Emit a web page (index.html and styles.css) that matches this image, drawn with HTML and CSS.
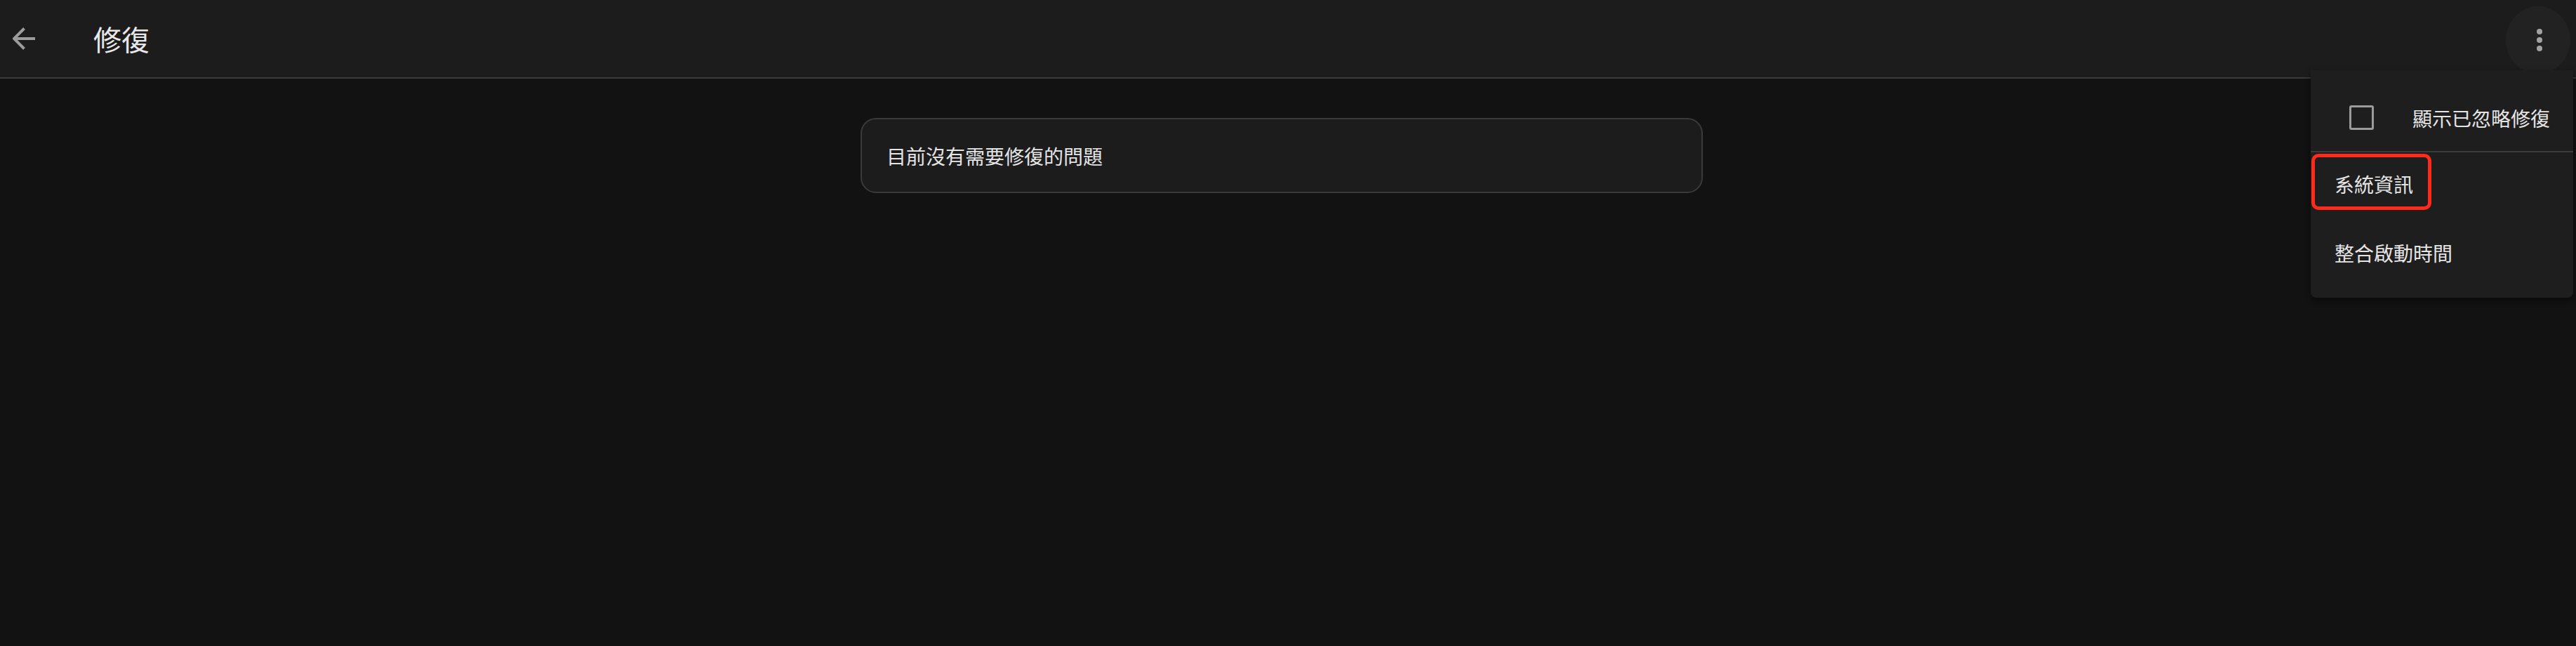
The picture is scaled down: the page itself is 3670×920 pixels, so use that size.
FILE: index.html
```html
<!DOCTYPE html>
<html lang="zh-Hant">
<head>
<meta charset="utf-8">
<title>修復</title>
<link rel="stylesheet" href="styles.css">
</head>
<body>
<header class="appbar">
  <button class="back" aria-label="返回">
    <svg viewBox="0 0 32 32" width="32" height="32"><path d="M32 16H2.5M16.5 1.5 2 16 16.5 30.5" fill="none" stroke="#9c9c9c" stroke-width="4" stroke-linecap="butt" stroke-linejoin="miter"/></svg>
  </button>
  <h1 class="title">修復</h1>
  <button class="more" aria-label="更多">
    <span class="dot"></span><span class="dot"></span><span class="dot"></span>
  </button>
</header>
<main class="content">
  <div class="card">目前沒有需要修復的問題</div>
</main>
<div class="menu">
  <div class="menu-item check-item">
    <span class="checkbox"></span>
    <span class="label">顯示已忽略修復</span>
  </div>
  <div class="divider"></div>
  <div class="menu-item item-hl">
    <span class="highlight">系統資訊</span>
  </div>
  <div class="menu-item item-last">
    <span class="label">整合啟動時間</span>
  </div>
</div>
</body>
</html>
```
FILE: styles.css
```css
html, body {
  margin: 0;
  padding: 0;
  background: #121212;
  height: 100%;
  overflow: hidden;
}
body {
  font-family: "Noto Sans CJK TC", "Noto Sans", sans-serif;
  color: #e4e4e4;
  position: relative;
}
.appbar {
  height: 110px;
  background: #1c1c1c;
  border-bottom: 2px solid #3a3a3a;
  display: flex;
  align-items: center;
}
.back {
  margin-left: 18px;
  width: 32px;
  height: 32px;
  padding: 0;
  border: 0;
  background: none;
  display: flex;
  margin-top: 0;
}
.title {
  margin: 0 0 0 83px;
  font-size: 40px;
  font-weight: 400;
  line-height: 1;
  color: #e8e8e8;
}
.more {
  margin-left: auto;
  margin-right: 8px;
  margin-top: 4px;
  width: 92px;
  height: 96px;
  border-radius: 50%;
  border: 0;
  background: #222222;
  display: flex;
  flex-direction: column;
  align-items: center;
  justify-content: center;
  gap: 4px;
  padding: 0 0 0 4px;
}
.dot {
  width: 8px;
  height: 8px;
  border-radius: 50%;
  background: #a3a3a3;
}
.content {
  display: flex;
  justify-content: center;
  padding: 56px 18px 0 0;
}
.card {
  box-sizing: border-box;
  width: 1200px;
  height: 107px;
  background: #1c1c1c;
  border: 2px solid #3a3a3a;
  border-radius: 22px;
  padding-left: 35px;
  display: flex;
  align-items: center;
  font-size: 28px;
  line-height: 1;
}
.menu {
  position: absolute;
  top: 100px;
  left: 3292px;
  width: 374px;
  height: 324px;
  box-sizing: border-box;
  background: #1e1e1e;
  border-radius: 0 0 8px 8px;
  box-shadow: 0 4px 10px rgba(0, 0, 0, 0.5);
  padding-top: 20px;
  font-size: 28px;
  line-height: 1;
}
.menu-item {
  display: flex;
  align-items: center;
}
.check-item {
  height: 95px;
  padding-left: 55px;
}
.checkbox {
  box-sizing: border-box;
  width: 35px;
  height: 35px;
  border: 3px solid #9a9a9a;
  border-radius: 3px;
  margin-right: 55px;
}
.divider {
  height: 2px;
  background: #3a3a3a;
}
.item-hl {
  height: 94px;
  align-items: flex-start;
  padding-left: 1px;
}
.highlight {
  margin-top: 2px;
  box-sizing: border-box;
  height: 80px;
  width: 171px;
  border: 5px solid #ff2a1a;
  border-radius: 10px;
  padding-left: 28px;
  display: flex;
  align-items: center;
  padding-top: 6px;
}
.item-last {
  height: 98px;
  padding-left: 34px;
}
```
